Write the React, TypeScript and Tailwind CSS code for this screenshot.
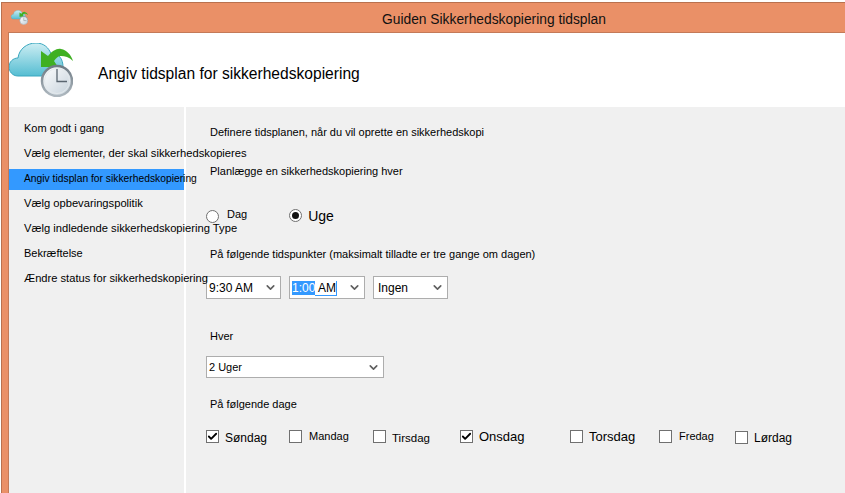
import { ChevronDown, Check } from "lucide-react"

const steps = [
  { label: "Kom godt i gang", size: "text-[11px]" },
  { label: "Vælg elementer, der skal sikkerhedskopieres", size: "text-[11.2px]" },
  { label: "Angiv tidsplan for sikkerhedskopiering", size: "text-[10.3px]", active: true },
  { label: "Vælg opbevaringspolitik", size: "text-[11.2px]" },
  { label: "Vælg indledende sikkerhedskopiering Type", size: "text-[11.2px]" },
  { label: "Bekræftelse", size: "text-[11px]" },
  { label: "Ændre status for sikkerhedskopiering", size: "text-[11.15px]" },
]

const days = [
  { label: "Søndag", checked: true, cell: "w-[83px]", text: "text-[12px] mt-[1px] ml-[6px]" },
  { label: "Mandag", cell: "w-[84px]", text: "text-[11px] -mt-[1px] ml-[7px]" },
  { label: "Tirsdag", cell: "w-[87px]", text: "text-[11.5px] mt-[1px] ml-[6px]" },
  { label: "Onsdag", checked: true, cell: "w-[110px]", text: "text-[13px] ml-[6px]" },
  { label: "Torsdag", cell: "w-[89px]", text: "text-[13px] ml-[6px]" },
  { label: "Fredag", cell: "w-[76px]", text: "text-[11px] -mt-[1px] ml-[7px]" },
  { label: "Lørdag", cell: "mt-[1px]", text: "text-[12px] ml-[6px]" },
]

function BackupIcon({ small }: { small?: boolean }) {
  const id = small ? "s" : "l"
  return (
    <svg viewBox="0 0 64 54" className={small ? "w-[17px] h-[15px]" : "w-[64px] h-[54px]"}>
      <defs>
        <linearGradient id={`cloud-${id}`} x1="0" y1="0" x2="0" y2="1">
          <stop offset="0" stopColor="#cdeef3" />
          <stop offset="1" stopColor="#55bdd2" />
        </linearGradient>
        <linearGradient id={`face-${id}`} x1="0" y1="0" x2="1" y2="1">
          <stop offset="0" stopColor="#ffffff" />
          <stop offset="1" stopColor="#c3d0da" />
        </linearGradient>
        <linearGradient id={`rim-${id}`} x1="0" y1="0" x2="0" y2="1">
          <stop offset="0" stopColor="#6f7b84" />
          <stop offset="1" stopColor="#aeb8bf" />
        </linearGradient>
      </defs>
      <path
        d="M9 33C3 33 0 28 0 24C0 19 4 15 9 15C10 6 18 0 27 0C35 0 40 5 42 11C50 10 54 16 54 24C54 29 51 33 46 33Z"
        fill={`url(#cloud-${id})`}
        stroke="#3aa7bf"
        strokeWidth="1"
      />
      <path d="M32 24V8L39 13C43 8 48 5 52 6C58 7 62 12 64 18C60 14 56 13 52 13C49 13 47 15 45 18L49 24Z" fill="#3fb022" />
      <circle cx="48" cy="38" r="15" fill={`url(#face-${id})`} stroke={`url(#rim-${id})`} strokeWidth="2.5" />
      <circle cx="48" cy="38" r="12.5" fill="none" stroke="#e3e9ec" strokeWidth="1" />
      <path d="M48 26V38.5H58" fill="none" stroke="#5a6670" strokeWidth="1.3" />
    </svg>
  )
}

function Combo({ value, width, selected, large }: { value: string; width: string; selected?: boolean; large?: boolean }) {
  return (
    <div className={`${width} h-[23px] bg-white border border-[#adadad] flex items-center pl-[2px] pr-[3px]`}>
      {selected ? (
        <span className="text-[12px] leading-[14px]">
          <span className="bg-[#3399ff] text-white">1:00</span>
          <span className="border-r border-b border-[#3399ff]"> AM</span>
        </span>
      ) : (
        <span className={large ? "text-[12px]" : "text-[12px] ml-[2px]"}>{value}</span>
      )}
      <ChevronDown className="ml-auto w-[13px] h-[13px] text-[#606060]" strokeWidth={3} />
    </div>
  )
}

export default function App() {
  return (
    <div className="w-[845px] h-[493px] overflow-hidden bg-white pt-[2px] pl-[1px] font-['Liberation_Sans',Arial,sans-serif] text-black">
      <div className="h-full flex flex-col bg-[#ea9067] border-t border-l border-[#b9714f]">
        <div className="h-[29px] shrink-0 flex items-center">
          <div className="ml-[9px]">
            <BackupIcon small />
          </div>
          <span className="ml-[354px] mt-[5px] text-[13.8px] leading-[16px] text-[#111]">
            Guiden Sikkerhedskopiering tidsplan
          </span>
        </div>
        <div className="flex-1 ml-[6px] flex flex-col bg-white min-h-0 border-t border-l border-[#c47a58]">
          <div className="h-[74px] shrink-0 flex items-start">
            <div className="mt-[10px]">
              <BackupIcon />
            </div>
            <h1 className="ml-[25px] mt-[33px] text-[15.6px] leading-[16px] font-normal whitespace-nowrap">
              Angiv tidsplan for sikkerhedskopiering
            </h1>
          </div>
          <div className="flex-1 flex min-h-0">
            <nav className="relative z-10 w-[175px] shrink-0 bg-[#f0f0f0] flex flex-col gap-[4px] pt-[12px]">
              {steps.map((s) => (
                <div
                  key={s.label}
                  className={`h-[21px] pl-[15px] pb-[2px] flex items-center whitespace-nowrap ${s.size} ${s.active ? "bg-[#3399ff]" : ""}`}
                >
                  {s.label}
                </div>
              ))}
            </nav>
            <main className="flex-1 ml-[2px] bg-[#f0f0f0] flex flex-col pl-[20px] text-[11px] leading-[14px]">
              <p className="mt-[18px] ml-[4px]">Definere tidsplanen, når du vil oprette en sikkerhedskopi</p>
              <p className="mt-[25px] ml-[4px]">Planlægge en sikkerhedskopiering hver</p>
              <div className="mt-[29px] flex items-start">
                <span className="w-[13px] h-[13px] mt-[3px] rounded-full bg-white border border-[#707070]" />
                <span className="ml-[8px]">Dag</span>
                <span className="ml-[42px] mt-[2px] w-[13px] h-[13px] rounded-full bg-white border border-[#707070] flex items-center justify-center">
                  <span className="w-[7px] h-[7px] rounded-full bg-[#111]" />
                </span>
                <span className="ml-[6px] mt-[1px] text-[14px] leading-[16px]">Uge</span>
              </div>
              <p className="mt-[23px] ml-[4px]">På følgende tidspunkter (maksimalt tilladte er tre gange om dagen)</p>
              <div className="mt-[15px] flex gap-[8px]">
                <Combo value="9:30 AM" width="w-[75px]" large />
                <Combo value="1:00 AM" width="w-[76px]" selected />
                <Combo value="Ingen" width="w-[75px]" />
              </div>
              <p className="mt-[30px] ml-[4px]">Hver</p>
              <div className="mt-[13px] w-[178px] h-[22px] bg-white border border-[#adadad] flex items-center pl-[2px] pr-[3px]">
                <span>2 Uger</span>
                <ChevronDown className="ml-auto w-[13px] h-[13px] text-[#606060]" strokeWidth={3} />
              </div>
              <p className="mt-[19px] ml-[4px]">På følgende dage</p>
              <div className="mt-[19px] flex items-start">
                {days.map((d) => (
                  <div key={d.label} className={`flex items-start ${d.cell}`}>
                    <div className="w-[13px] h-[13px] bg-white border border-[#707070] flex items-center justify-center">
                      {d.checked && <Check className="w-[11px] h-[11px]" strokeWidth={4} />}
                    </div>
                    <span className={`${d.text} whitespace-nowrap leading-[14px]`}>{d.label}</span>
                  </div>
                ))}
              </div>
            </main>
          </div>
        </div>
      </div>
    </div>
  )
}
